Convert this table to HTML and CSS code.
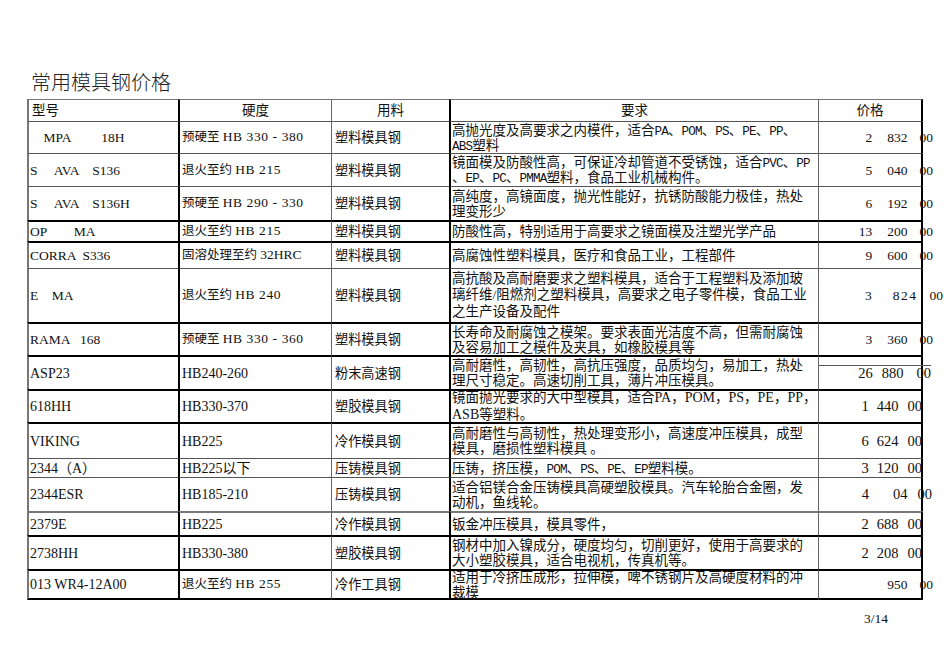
FILE: index.html
```html
<!DOCTYPE html>
<html lang="zh-CN">
<head>
<meta charset="utf-8">
<title>常用模具钢价格</title>
<link rel="stylesheet" href="styles.css">
</head>
<body>
<div class="page">
<h1 class="title">常用模具钢价格</h1>
<div class="grid">
<div class="tr hd">
<div class="c"><p>型号</p></div>
<div class="c"><p class="ctr">硬度</p></div>
<div class="c"><p class="ctr">用料</p></div>
<div class="c"><p class="ctr">要求</p></div>
<div class="c"><p class="ctr">价格</p></div>
</div>
<div class="tr">
<div class="c"><p>    MPA         18H</p></div>
<div class="c"><p>预硬至 <span class="lt">HB 330 - 380</span></p></div>
<div class="c"><p>塑料模具钢</p></div>
<div class="c"><p>高抛光度及高要求之内模件，适合<span class="s">PA</span>、<span class="s">POM</span>、<span class="s">PS</span>、<span class="s">PE</span>、<span class="s">PP</span>、<br><span class="s">ABS</span>塑料</p></div>
<div class="c pr"><div class="pv a"><span class="ld">2</span><span class="in">832</span><span class="dc">00</span></div></div>
</div>
<div class="tr">
<div class="c"><p>S     AVA    S136</p></div>
<div class="c"><p>退火至约 <span class="lt">HB 215</span></p></div>
<div class="c"><p>塑料模具钢</p></div>
<div class="c"><p>镜面模及防酸性高，可保证冷却管道不受锈蚀，适合<span class="s">PVC</span>、<span class="s">PP</span><br>、<span class="s">EP</span>、<span class="s">PC</span>、<span class="s">PMMA</span>塑料，食品工业机械构件。</p></div>
<div class="c pr"><div class="pv a"><span class="ld">5</span><span class="in">040</span><span class="dc">00</span></div></div>
</div>
<div class="tr">
<div class="c"><p>S     AVA    S136H</p></div>
<div class="c"><p>预硬至 <span class="lt">HB 290 - 330</span></p></div>
<div class="c"><p>塑料模具钢</p></div>
<div class="c"><p>高纯度，高镜面度，抛光性能好，抗锈防酸能力极佳，热处<br>理变形少</p></div>
<div class="c pr"><div class="pv a"><span class="ld">6</span><span class="in">192</span><span class="dc">00</span></div></div>
</div>
<div class="tr k">
<div class="c"><p>OP        MA</p></div>
<div class="c"><p>退火至约 <span class="lt">HB 215</span></p></div>
<div class="c"><p>塑料模具钢</p></div>
<div class="c"><p>防酸性高，特别适用于高要求之镜面模及注塑光学产品</p></div>
<div class="c pr"><div class="pv a"><span class="ld">13</span><span class="in">200</span><span class="dc">00</span></div></div>
</div>
<div class="tr k">
<div class="c"><p>CORRA  S336</p></div>
<div class="c"><p>固溶处理至约 <span class="lt2">32HRC</span></p></div>
<div class="c"><p>塑料模具钢</p></div>
<div class="c"><p>高腐蚀性塑料模具，医疗和食品工业，工程部件</p></div>
<div class="c pr"><div class="pv a"><span class="ld">9</span><span class="in">600</span><span class="dc">00</span></div></div>
</div>
<div class="tr">
<div class="c"><p>E    MA</p></div>
<div class="c"><p>退火至约 <span class="lt">HB 240</span></p></div>
<div class="c"><p>塑料模具钢</p></div>
<div class="c"><p class="tall">高抗酸及高耐磨要求之塑料模具，适合于工程塑料及添加玻<br>璃纤维/阻燃剂之塑料模具，高要求之电子零件模，食品工业<br>之生产设备及配件</p></div>
<div class="c pr"><div class="pv b"><span class="ld">3</span><span class="in">824</span><span class="dc">00</span></div></div>
</div>
<div class="tr k">
<div class="c"><p>RAMA   168</p></div>
<div class="c"><p>预硬至 <span class="lt">HB 330 - 360</span></p></div>
<div class="c"><p>塑料模具钢</p></div>
<div class="c"><p>长寿命及耐腐蚀之模架。要求表面光洁度不高，但需耐腐蚀<br>及容易加工之模件及夹具，如橡胶模具等</p></div>
<div class="c pr"><div class="pv a"><span class="ld">3</span><span class="in">360</span><span class="dc">00</span></div></div>
</div>
<div class="tr k tn">
<div class="c"><p>ASP23</p></div>
<div class="c"><p>HB240-260</p></div>
<div class="c"><p>粉末高速钢</p></div>
<div class="c"><p>高耐磨性，高韧性，高抗压强度，品质均匀，易加工，热处<br>理尺寸稳定。高速切削工具，薄片冲压模具。</p></div>
<div class="c pr"><div class="pv c"><span class="ld">26</span><span class="in">880</span><span class="dc">00</span></div></div>
</div>
<div class="tr k tn">
<div class="c"><p>618HH</p></div>
<div class="c"><p>HB330-370</p></div>
<div class="c"><p>塑胶模具钢</p></div>
<div class="c"><p class="tall">镜面抛光要求的大中型模具，适合<span class="t">PA</span>，<span class="t">POM</span>，<span class="t">PS</span>，<span class="t">PE</span>，<span class="t">PP</span>，<br><span class="t">ASB</span>等塑料。</p></div>
<div class="c pr"><div class="pv d"><span class="ld">1</span><span class="in">440</span><span class="dc">00</span></div></div>
</div>
<div class="tr k tn">
<div class="c"><p>VIKING</p></div>
<div class="c"><p>HB225</p></div>
<div class="c"><p>冷作模具钢</p></div>
<div class="c"><p>高耐磨性与高韧性，热处理变形小，高速度冲压模具，成型<br>模具，磨损性塑料模具 。</p></div>
<div class="c pr"><div class="pv d"><span class="ld">6</span><span class="in">624</span><span class="dc">00</span></div></div>
</div>
<div class="tr tn">
<div class="c"><p>2344（A）</p></div>
<div class="c"><p>HB225以下</p></div>
<div class="c"><p>压铸模具钢</p></div>
<div class="c"><p>压铸，挤压模，<span class="s">POM</span>、<span class="s">PS</span>、<span class="s">PE</span>、<span class="s">EP</span>塑料模。</p></div>
<div class="c pr"><div class="pv d"><span class="ld">3</span><span class="in">120</span><span class="dc">00</span></div></div>
</div>
<div class="tr tn">
<div class="c"><p>2344ESR</p></div>
<div class="c"><p>HB185-210</p></div>
<div class="c"><p>压铸模具钢</p></div>
<div class="c"><p>适合铝镁合金压铸模具高硬塑胶模具。汽车轮胎合金圈，发<br>动机，鱼线轮。</p></div>
<div class="c pr"><div class="pv e"><span class="ld">4</span><span class="in">04</span><span class="dc">00</span></div></div>
</div>
<div class="tr g tn">
<div class="c"><p>2379E</p></div>
<div class="c"><p>HB225</p></div>
<div class="c"><p>冷作模具钢</p></div>
<div class="c"><p>钣金冲压模具，模具零件，</p></div>
<div class="c pr"><div class="pv d"><span class="ld">2</span><span class="in">688</span><span class="dc">00</span></div></div>
</div>
<div class="tr k tn">
<div class="c"><p>2738HH</p></div>
<div class="c"><p>HB330-380</p></div>
<div class="c"><p>塑胶模具钢</p></div>
<div class="c"><p>钢材中加入镍成分，硬度均匀，切削更好，使用于高要求的<br>大小塑胶模具，适合电视机，传真机等。</p></div>
<div class="c pr"><div class="pv d"><span class="ld">2</span><span class="in">208</span><span class="dc">00</span></div></div>
</div>
<div class="tr k last">
<div class="c"><p class="tnc">013 WR4-12A00</p></div>
<div class="c"><p>退火至约 <span class="lt">HB 255</span></p></div>
<div class="c"><p>冷作工具钢</p></div>
<div class="c"><p>适用于冷挤压成形，拉伸模，啤不锈钢片及高硬度材料的冲<br>裁模</p></div>
<div class="c pr"><div class="pv a"><span class="in">950</span><span class="dc">00</span></div></div>
</div>
</div>
<div class="foot">3/14</div>
</div>
</body>
</html>
```

FILE: styles.css
```css
body {
  margin: 0;
  background: #fff;
  color: #111;
  font-family: "Liberation Serif", "Noto Sans CJK SC", serif;
}

.page {
  padding: 70px 0 0 27px;
  width: 896px;
}

.title {
  margin: 0;
  padding-left: 4px;
  height: 24px;
  font: 300 20px/24px "Noto Sans CJK SC", sans-serif;
  color: #222;
}

.grid {
  margin-top: 5px;
  width: 896px;
  display: grid;
  grid-template-columns: 151px 153px 118px 369px 105px;
  grid-template-rows: 22px 32px 33px 34px 21px 27px 54px 33px 34px 33px 36px 19px 34px 24px 34px 31px;
  font-size: 13.5px;
}

.tr {
  display: contents;
}

.c {
  box-sizing: border-box;
  display: flex;
  align-items: center;
  min-width: 0;
  white-space: pre;
  line-height: 15px;
  border-top: 1px solid #555;
}

.c p {
  margin: 0;
  white-space: pre;
}

.c p.ctr {
  flex: 1;
  text-align: center;
}

.c p.tall {
  line-height: 16.5px;
}

.tr > .c:nth-child(1) {
  border-left: 2px solid #777;
  padding-left: 1px;
}

.tr > .c:nth-child(2) {
  border-left: 2px solid #000;
  padding-left: 2px;
  font-size: 12.5px;
}

.tr > .c:nth-child(3) {
  border-left: 1px solid #666;
  padding-left: 3px;
  font-size: 13.2px;
}

.tr > .c:nth-child(4) {
  border-left: 2px solid #000;
  padding-left: 1px;
}

.tr > .c:nth-child(5) {
  border-left: 1px solid #666;
  border-right: 2px solid #000;
}

.hd > .c {
  border-top-color: #777;
}

.hd > .c:nth-child(1) { padding-left: 3px; }
.hd > .c:nth-child(2),
.hd > .c:nth-child(3) { font-size: 13.5px; padding-left: 0; }
.hd > .c:nth-child(4) { padding-left: 0; }

.tr.k > .c { border-top: 2px solid #000; }
.tr.g > .c { border-top: 2px solid #777; }
.tr.last > .c { border-bottom: 2px solid #000; }

/* Latin runs set in the narrow half-width face */
.s {
  font-family: "Liberation Mono", monospace;
  font-size: 12.6px;
  letter-spacing: -0.8px;
  line-height: 0;
}

.t {
  font-size: 14px;
  line-height: 0;
}

.lt {
  font-size: 13.5px;
  letter-spacing: 0.6px;
  line-height: 0;
}

.lt2 {
  font-size: 13.5px;
  line-height: 0;
}

/* Times-style rows */
.tr.tn > .c:nth-child(1),
.tr.tn > .c:nth-child(2),
.c .tnc {
  font-size: 14px;
}

/* price cells */
.pv {
  flex: 1;
  display: flex;
  justify-content: flex-end;
  align-items: baseline;
  white-space: pre;
}

.pv.a { margin-right: -12px; }
.pv.a .in { margin-left: 15px; }
.pv.a .dc { margin-left: 12px; }

.pv.b { margin-right: -22px; }
.pv.b .in { margin-left: 21px; letter-spacing: 1.5px; }
.pv.b .dc { margin-left: 12px; }

.tn .pv { font-size: 14.5px; }

.pv.c { margin-right: -10px; }
.pv.c .in { margin-left: 9px; }
.pv.c .dc { margin-left: 13px; }

.pv.d { margin-right: -1px; }
.pv.d .in { margin-left: 8px; }
.pv.d .dc { margin-left: 9px; }

.pv.e { margin-right: -11px; }
.pv.e .in { margin-left: 24px; }
.pv.e .dc { margin-left: 10px; }

.foot {
  padding: 11px 35px 0 0;
  text-align: right;
  font-size: 13.5px;
  line-height: 16px;
}
```
